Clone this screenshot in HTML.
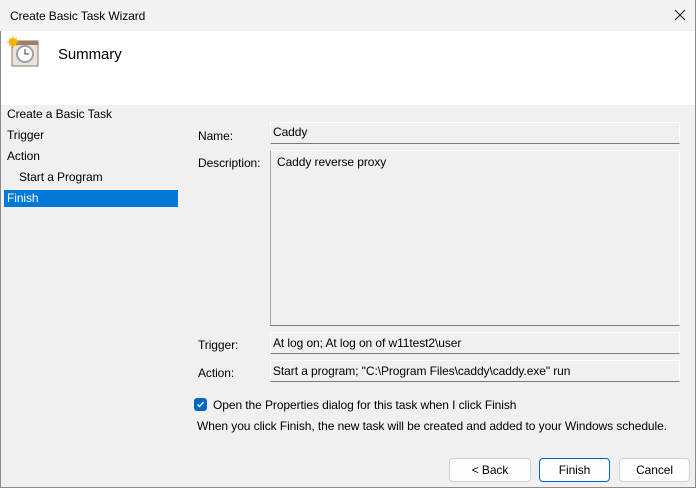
<!DOCTYPE html><html><head><style>
*{margin:0;padding:0;box-sizing:border-box}
body{width:696px;height:488px;background:#f0f0f0;font-family:"Liberation Sans",sans-serif;font-size:12px;color:#000;position:relative;overflow:hidden;letter-spacing:-0.08px}
.win{position:absolute;left:0;top:0;width:696px;height:488px;border:1px solid #8a8a8a;border-top:none}
.t{position:absolute;white-space:nowrap}
.box{position:absolute;left:270px;width:410px;border:1px solid #fff;border-bottom:1px solid #7a7a7a;background:#f0f0f0}
.btn{position:absolute;top:458px;height:24px;background:#fdfdfd;border:1px solid #d0d0d0;border-radius:4px;text-align:center;line-height:22px}
</style></head><body>
<div class="win"></div>
<div style="position:absolute;left:0;top:0;width:695px;height:31px;background:#f3f3f3"></div>
<div class="t" style="left:10px;top:9px">Create Basic Task Wizard</div>
<svg style="position:absolute;left:674px;top:9px" width="12" height="12"><path d="M1 1l10 10M11 1L1 11" stroke="#222" stroke-width="1.1"/></svg>
<div style="position:absolute;left:1px;top:31px;width:694px;height:74px;background:#fff"></div>
<svg style="position:absolute;left:6px;top:36px" width="34" height="32">
<rect x="6" y="5" width="26" height="25" fill="#e8e4dc" stroke="#8a7a6a"/>
<rect x="6" y="5" width="26" height="4" fill="#a08060"/>
<circle cx="19" cy="18" r="8" fill="#fff" stroke="#a0a0a0" stroke-width="2"/>
<path d="M19 13v5h4" stroke="#333" fill="none"/>
<circle cx="7" cy="6" r="4" fill="#f6b400"/>
<path d="M7 0v12M1 6h12M3 2l8 8M11 2l-8 8" stroke="#f6b400"/>
</svg>
<div class="t" style="left:58px;top:46px;font-size:15px">Summary</div>
<div class="t" style="left:7px;top:107px">Create a Basic Task</div>
<div class="t" style="left:7px;top:128px">Trigger</div>
<div class="t" style="left:7px;top:149px">Action</div>
<div class="t" style="left:19px;top:170px">Start a Program</div>
<div style="position:absolute;left:4px;top:190px;width:174px;height:17px;background:#0078d7"></div>
<div class="t" style="left:7px;top:191px;color:#fff">Finish</div>
<div class="t" style="left:198px;top:129px">Name:</div>
<div class="t" style="left:198px;top:156px">Description:</div>
<div class="t" style="left:198px;top:338px">Trigger:</div>
<div class="t" style="left:198px;top:366px">Action:</div>
<div class="box" style="top:122px;height:22px"></div>
<div class="t" style="left:273px;top:125px">Caddy</div>
<div class="box" style="top:150px;height:176px;border-left-color:#a0a0a0"></div>
<div class="t" style="left:277px;top:155px">Caddy reverse proxy</div>
<div class="box" style="top:332px;height:22px"></div>
<div class="t" style="left:273px;top:336px">At log on; At log on of w11test2\user</div>
<div class="box" style="top:360px;height:22px"></div>
<div class="t" style="left:273px;top:364px">Start a program; "C:\Program Files\caddy\caddy.exe" run</div>
<div style="position:absolute;left:194px;top:398px;width:13px;height:13px;background:#0067c0;border-radius:3px"></div>
<svg style="position:absolute;left:194px;top:398px" width="13" height="13"><path d="M3.5 6.5l2 2 4-4.5" stroke="#fff" stroke-width="1.3" fill="none"/></svg>
<div class="t" style="left:213px;top:398px">Open the Properties dialog for this task when I click Finish</div>
<div class="t" style="left:197px;top:419px">When you click Finish, the new task will be created and added to your Windows schedule.</div>
<div class="btn" style="left:449px;width:82px">&lt; Back</div>
<div class="btn" style="left:539px;width:71px;border-color:#0067c0">Finish</div>
<div class="btn" style="left:619px;width:71px">Cancel</div>
</body></html>
